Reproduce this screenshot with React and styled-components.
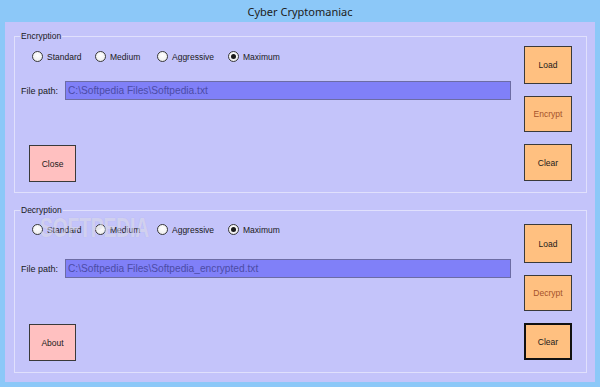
import React from 'react';
import styled, { createGlobalStyle } from 'styled-components';

const GlobalStyle = createGlobalStyle`
  html, body {
    margin: 0;
    padding: 0;
    background: #8cc8f8;
  }
  body {
    font-family: "Liberation Sans", Arial, sans-serif;
    font-size: 8.5px;
    color: #1a1a1a;
  }
`;

const Window = styled.div`
  width: 600px;
  height: 387px;
  background: #8cc8f8;
  display: flex;
  flex-direction: column;
  position: relative;
  overflow: hidden;
`;

const TitleBar = styled.div`
  height: 22px;
  display: flex;
  align-items: center;
  justify-content: center;
  font-family: "Noto Sans", "Open Sans", sans-serif;
  font-size: 11px;
  color: #202020;
  padding-top: 1px;
  box-sizing: border-box;
`;

const Client = styled.div`
  height: 360px;
  margin: 0 5px;
  background: #c4c4fa;
  box-sizing: border-box;
  padding: 14px 8px 0 9px;
  display: flex;
  flex-direction: column;
  gap: 17px;
`;

const Group = styled.div`
  height: ${(p) => p.$height}px;
  box-sizing: border-box;
  border: 1px solid #e0e0fc;
  padding: 0 14px ${(p) => p.$bottom}px 6px;
  display: flex;
  flex-direction: column;
`;

const Legend = styled.div`
  align-self: flex-start;
  margin-top: -7px;
  margin-left: -1px;
  padding: 0 1px;
  line-height: 12px;
  height: 12px;
  background: #c4c4fa;
`;

const Body = styled.div`
  flex: 1;
  display: flex;
  flex-direction: row;
`;

const LeftCol = styled.div`
  flex: 1;
  margin-right: 13px;
  display: flex;
  flex-direction: column;
`;

const RadioRow = styled.div`
  display: flex;
  align-items: center;
  height: 13px;
  margin-top: ${(p) => p.$top}px;
  margin-left: 11px;
`;

const RadioItem = styled.label`
  display: flex;
  align-items: center;
  width: ${(p) => p.$width}px;
  white-space: nowrap;
`;

const RadioDot = styled.span`
  width: 11px;
  height: 11px;
  border-radius: 50%;
  box-sizing: border-box;
  border: 1px solid #3a3a3a;
  background: radial-gradient(circle at 50% 40%, #ffffff 0%, #f2f2f2 60%, #dcdcdc 100%);
  margin-right: 4px;
  display: flex;
  align-items: center;
  justify-content: center;
  flex: none;

  &::after {
    content: "";
    width: 5px;
    height: 5px;
    border-radius: 50%;
    background: ${(p) => (p.$checked ? '#1a1a1a' : 'transparent')};
  }
`;

const PathRow = styled.div`
  display: flex;
  align-items: center;
  margin-top: ${(p) => p.$top}px;
`;

const PathLabel = styled.span`
  width: 44px;
  flex: none;
  font-size: 9px;
`;

const PathInput = styled.div`
  flex: 1;
  height: 19px;
  box-sizing: border-box;
  background: #8080f8;
  border: 1px solid #6c6ca4;
  color: #4c4ca6;
  font-size: 10.2px;
  display: flex;
  align-items: center;
  padding-left: 2px;
  white-space: nowrap;
`;

const ButtonCol = styled.div`
  width: 48px;
  display: flex;
  flex-direction: column;
  gap: 12px;
  padding-top: ${(p) => p.$top}px;
`;

const ActionButton = styled.div`
  width: ${(p) => p.$width || 48}px;
  height: ${(p) => p.$h || 37}px;
  box-sizing: border-box;
  border: ${(p) => (p.$focused ? '2px solid #111' : '1px solid #3a3a3a')};
  background: ${(p) => (p.$pink ? '#ffc0c0' : '#ffc080')};
  color: ${(p) => (p.$dim ? '#a5522a' : '#1a1a1a')};
  display: flex;
  align-items: center;
  justify-content: center;
  font-size: 8.5px;
  flex: none;
`;

const BottomButton = styled(ActionButton)`
  margin-top: auto;
  margin-left: 8px;
`;

const Watermark = styled.div`
  position: absolute;
  left: 40px;
  top: 212px;
  font-family: "Liberation Sans", Arial, sans-serif;
  font-weight: bold;
  font-size: 28px;
  line-height: 32px;
  transform: scaleX(0.68);
  transform-origin: left top;
  color: rgba(255, 255, 255, 0.42);
  text-shadow: 0 0 1px rgba(120, 120, 160, 0.25);
  pointer-events: none;
`;

const levels = [
  { name: 'Standard', width: 63 },
  { name: 'Medium', width: 62 },
  { name: 'Aggressive', width: 71 },
  { name: 'Maximum', width: 70 },
];

function Radios({ top }) {
  return (
    <RadioRow $top={top}>
      {levels.map((l) => (
        <RadioItem key={l.name} $width={l.width}>
          <RadioDot $checked={l.name === 'Maximum'} />
          {l.name}
        </RadioItem>
      ))}
    </RadioRow>
  );
}

export default function App() {
  return (
    <>
      <GlobalStyle />
      <Window>
        <TitleBar>Cyber Cryptomaniac</TitleBar>
        <Client>
          <Group $height={157} $bottom={10}>
            <Legend>Encryption</Legend>
            <Body>
              <LeftCol>
                <Radios top={8} />
                <PathRow $top={18}>
                  <PathLabel>File path:</PathLabel>
                  <PathInput>C:\Softpedia Files\Softpedia.txt</PathInput>
                </PathRow>
                <BottomButton $pink $width={47}>Close</BottomButton>
              </LeftCol>
              <ButtonCol $top={4}>
                <ActionButton $h={38}>Load</ActionButton>
                <ActionButton $h={36} $dim>Encrypt</ActionButton>
                <ActionButton>Clear</ActionButton>
              </ButtonCol>
            </Body>
          </Group>

          <Group $height={163} $bottom={11}>
            <Legend>Decryption</Legend>
            <Body>
              <LeftCol>
                <Radios top={7} />
                <PathRow $top={23}>
                  <PathLabel>File path:</PathLabel>
                  <PathInput>C:\Softpedia Files\Softpedia_encrypted.txt</PathInput>
                </PathRow>
                <BottomButton $pink $width={47}>About</BottomButton>
              </LeftCol>
              <ButtonCol $top={8}>
                <ActionButton $h={39}>Load</ActionButton>
                <ActionButton $h={36} $dim>Decrypt</ActionButton>
                <ActionButton $focused>Clear</ActionButton>
              </ButtonCol>
            </Body>
          </Group>
        </Client>
        <Watermark>SOFTPEDIA</Watermark>
      </Window>
    </>
  );
}
